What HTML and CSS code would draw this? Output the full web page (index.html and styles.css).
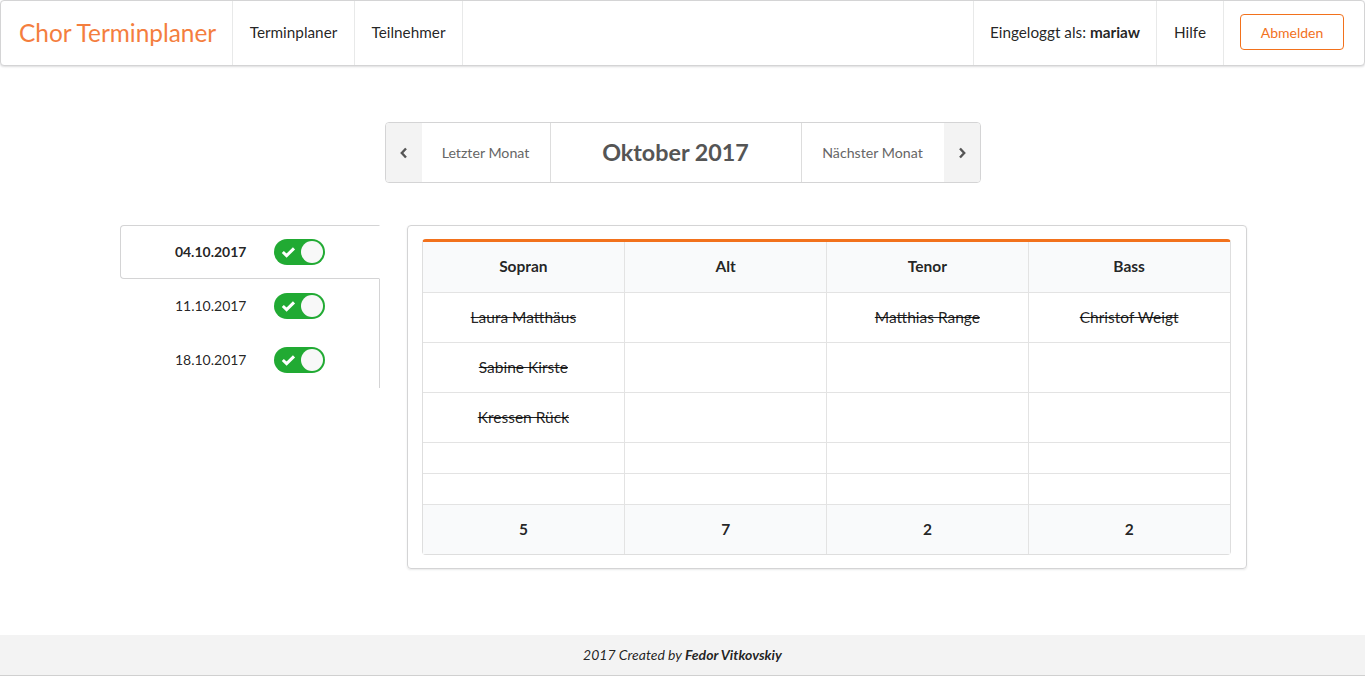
FILE: index.html
```html
<!DOCTYPE html>
<html lang="de">
<head>
<meta charset="utf-8">
<title>Chor Terminplaner</title>
<link rel="stylesheet" href="styles.css">
</head>
<body>
<div class="page">
  <header class="navbar">
    <a class="nav-item brand">Chor Terminplaner</a>
    <a class="nav-item">Terminplaner</a>
    <a class="nav-item">Teilnehmer</a>
    <div class="nav-right">
      <span class="nav-item">Eingeloggt als:&nbsp;<b>mariaw</b></span>
      <a class="nav-item">Hilfe</a>
      <span class="nav-item last"><button class="btn-orange">Abmelden</button></span>
    </div>
  </header>

  <main class="main">
    <div class="month-nav">
      <span class="arrow"><svg width="10" height="12" viewBox="0 0 10 12"><path d="M7 1.5 L2.8 6 L7 10.5" fill="none" stroke="#555" stroke-width="2.4"/></svg></span>
      <span class="month-link prev">Letzter Monat</span>
      <span class="month-title">Oktober 2017</span>
      <span class="month-link next">Nächster Monat</span>
      <span class="arrow"><svg width="10" height="12" viewBox="0 0 10 12"><path d="M3 1.5 L7.2 6 L3 10.5" fill="none" stroke="#555" stroke-width="2.4"/></svg></span>
    </div>

    <div class="content">
      <div class="tabs">
        <div class="tab active"><span class="date">04.10.2017</span><span class="toggle"><svg width="15" height="12" viewBox="0 0 15 12"><path d="M1.8 6 L5.6 9.6 L13 2.4" fill="none" stroke="#fff" stroke-width="3"/></svg><i class="knob"></i></span></div>
        <div class="tab"><span class="date">11.10.2017</span><span class="toggle"><svg width="15" height="12" viewBox="0 0 15 12"><path d="M1.8 6 L5.6 9.6 L13 2.4" fill="none" stroke="#fff" stroke-width="3"/></svg><i class="knob"></i></span></div>
        <div class="tab"><span class="date">18.10.2017</span><span class="toggle"><svg width="15" height="12" viewBox="0 0 15 12"><path d="M1.8 6 L5.6 9.6 L13 2.4" fill="none" stroke="#fff" stroke-width="3"/></svg><i class="knob"></i></span></div>
      </div>

      <div class="segment">
        <table class="voices">
          <thead>
            <tr><th>Sopran</th><th>Alt</th><th>Tenor</th><th>Bass</th></tr>
          </thead>
          <tbody>
            <tr class="row"><td><s>Laura Matthäus</s></td><td></td><td><s>Matthias Range</s></td><td><s>Christof Weigt</s></td></tr>
            <tr class="row"><td><s>Sabine Kirste</s></td><td></td><td></td><td></td></tr>
            <tr class="row"><td><s>Kressen Rück</s></td><td></td><td></td><td></td></tr>
            <tr class="empty"><td></td><td></td><td></td><td></td></tr>
            <tr class="empty"><td></td><td></td><td></td><td></td></tr>
          </tbody>
          <tfoot>
            <tr><th>5</th><th>7</th><th>2</th><th>2</th></tr>
          </tfoot>
        </table>
      </div>
    </div>
  </main>

  <footer class="footer"><i>2017 Created by <b>Fedor Vitkovskiy</b></i></footer>
</div>
</body>
</html>
```

FILE: styles.css
```css
* { box-sizing: border-box; }
html, body { margin: 0; padding: 0; }
body {
  font-family: Lato, "Open Sans", "Liberation Sans", sans-serif;
  font-size: 14px;
  color: rgba(0,0,0,.87);
  background: #fff;
}
.page {
  min-height: 676px;
  display: flex;
  flex-direction: column;
}

/* navbar */
.navbar {
  display: flex;
  height: 66px;
  border: 1px solid #d4d4d5;
  border-radius: 4px;
  box-shadow: 0 1px 2px 0 rgba(34,36,38,.15);
  background: #fff;
}
.nav-item {
  display: flex;
  align-items: center;
  padding: 0 17px 2px;
  font-size: 15.3px;
  color: rgba(0,0,0,.87);
  border-right: 1px solid rgba(34,36,38,.1);
  white-space: nowrap;
}
.nav-item b { font-weight: 700; }
.brand {
  font-size: 24.4px;
  color: #f47e3e;
  padding: 0 17px 2px 18px;
  width: 232px;
}
.navbar > .nav-item:nth-child(2) { width: 122px; justify-content: center; }
.navbar > .nav-item:nth-child(3) { width: 108px; justify-content: center; }
.nav-right {
  margin-left: auto;
  display: flex;
  border-left: 1px solid rgba(34,36,38,.1);
}
.nav-right .nav-item:nth-child(1) { width: 183px; justify-content: center; }
.nav-right .nav-item:nth-child(2) { width: 67px; justify-content: center; }
.nav-item.last { border-right: none; padding: 0 20px 2px 16px; }
.btn-orange {
  font-family: inherit;
  font-size: 14px;
  color: #f2711c;
  background: #fff;
  border: 1px solid #f2711c;
  border-radius: 4px;
  width: 104px;
  height: 36px;
  padding: 0;
}

/* main */
.main { flex: 1; }
.month-nav {
  display: flex;
  width: 596px;
  height: 61px;
  margin: 56px auto 0;
  border: 1px solid #d4d4d5;
  border-radius: 4px;
  overflow: hidden;
}
.arrow {
  width: 36px;
  background: #f3f3f3;
  display: flex;
  align-items: center;
  justify-content: center;
}
.month-link {
  display: flex;
  align-items: center;
  justify-content: center;
  font-size: 14.2px;
  color: #666;
}
.month-link.prev { width: 129px; border-right: 1px solid #ddd; }
.month-link.next { width: 143px; border-left: 1px solid #ddd; }
.month-title {
  flex: 1;
  display: flex;
  align-items: center;
  justify-content: center;
  font-size: 23.3px;
  font-weight: 700;
  color: #555;
  padding-bottom: 2px;
}

.content {
  display: flex;
  gap: 27px;
  width: 1128px;
  margin: 42px auto 0;
  padding-bottom: 50px;
}
.tabs {
  width: 261px;
  flex: none;
  border-right: 1px solid #d4d4d5;
  align-self: flex-start;
  height: 163px;
  padding-left: 2px;
}
.tab {
  height: 54px;
  display: flex;
  align-items: center;
  justify-content: center;
  gap: 27px;
  border: 1px solid transparent;
  font-size: 14px;
  color: rgba(0,0,0,.87);
  padding-bottom: 1px;
}
.tab.active {
  border: 1px solid #d4d4d5;
  border-right: 1px solid #fff;
  border-radius: 4px 0 0 4px;
  margin-left: -1px;
  margin-right: -1px;
  font-weight: 700;
  height: 54px;
}
.tab .date { width: 72px; text-align: right; }
.toggle {
  position: relative;
  width: 51px;
  height: 26px;
  border-radius: 13px;
  background: #21aa33;
  display: flex;
  align-items: center;
  padding-left: 7px;
}
.knob {
  position: absolute;
  right: 2px;
  top: 2px;
  width: 22px;
  height: 22px;
  border-radius: 50%;
  background: #f8f8f8;
}

.segment {
  width: 840px;
  border: 1px solid #d4d4d5;
  border-radius: 4px;
  box-shadow: 0 1px 2px 0 rgba(34,36,38,.1);
  padding: 13px 15px 13px 14px;
}
.voices {
  width: 100%;
  border-collapse: separate;
  border-spacing: 0;
  border: 1px solid #dedede;
  border-top: 3px solid #f2711c;
  border-radius: 4px;
  table-layout: fixed;
}
.voices th, .voices td {
  text-align: center;
  border-left: 1px solid #e3e3e3;
  border-bottom: 1px solid #e3e3e3;
  font-size: 15.5px;
  padding: 0 0 2px;
}
.voices tr > :first-child { border-left: none; }
.voices thead th {
  background: #f9fafb;
  font-weight: 700;
  height: 51px;
}
.voices tfoot th {
  background: #f9fafb;
  font-weight: 700;
  height: 49px;
  border-bottom: none;
}
.voices tr.row td { height: 50px; }
.voices tr.empty td { height: 31px; }
.voices s { text-decoration: line-through; }

.footer {
  height: 41px;
  background: #f3f3f3;
  border-bottom: 1px solid #d0d0d0;
  display: flex;
  align-items: center;
  justify-content: center;
  font-size: 14px;
  color: rgba(0,0,0,.87);
  padding-bottom: 2px;
}
```
